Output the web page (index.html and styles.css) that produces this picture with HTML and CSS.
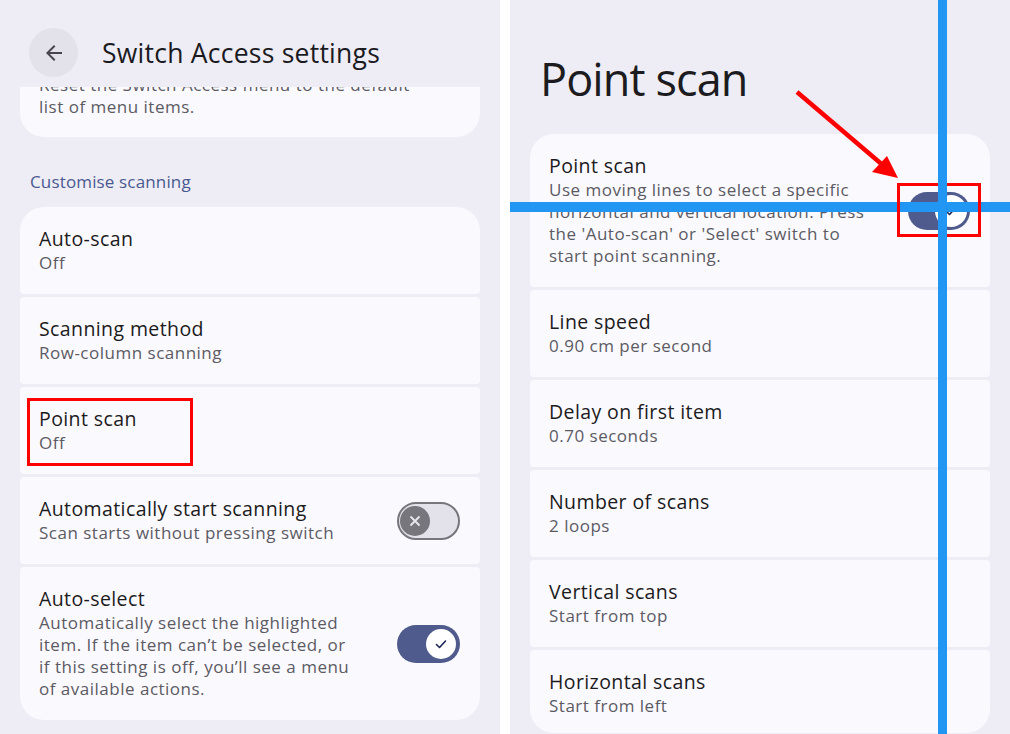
FILE: index.html
```html
<!DOCTYPE html>
<html lang="en">
<head>
<meta charset="utf-8">
<title>Switch Access settings – Point scan</title>
<link rel="stylesheet" href="styles.css">
</head>
<body>
<div class="screens">
  <section class="panel left">
    <header class="appbar">
      <button class="back" aria-label="Back">
        <svg viewBox="0 0 24 24" width="24" height="24"><path d="M20 11H7.83l5.59-5.59L12 4l-8 8 8 8 1.41-1.41L7.83 13H20v-2z" fill="#49454f"/></svg>
      </button>
      <h1 class="appbar-title">Switch Access settings</h1>
    </header>
    <div class="card clipped">
      <p class="clipped-text">Reset the Switch Access menu to the default<br>list of menu items.</p>
    </div>
    <h2 class="section">Customise scanning</h2>
    <div class="group">
      <div class="item">
        <div class="text"><div class="title">Auto-scan</div><div class="sub">Off</div></div>
      </div>
      <div class="item">
        <div class="text"><div class="title">Scanning method</div><div class="sub">Row-column scanning</div></div>
      </div>
      <div class="item">
        <div class="text"><div class="title">Point scan</div><div class="sub">Off</div></div>
      </div>
      <div class="item">
        <div class="text"><div class="title">Automatically start scanning</div><div class="sub">Scan starts without pressing switch</div></div>
        <span class="toggle off"><span class="knob"><svg viewBox="0 0 16 16" width="16" height="16"><path d="M4 4l8 8M12 4l-8 8" stroke="#e9e8ee" stroke-width="1.8" stroke-linecap="round"/></svg></span></span>
      </div>
      <div class="item">
        <div class="text narrow"><div class="title">Auto-select</div><div class="sub">Automatically select the highlighted item. If the item can’t be selected, or if this setting is off, you’ll see a menu of available actions.</div></div>
        <span class="toggle on"><span class="knob"><svg viewBox="0 0 16 16" width="16" height="16"><path d="M3.5 8.5l3 3 6-6.5" stroke="#1b2656" stroke-width="1.6" fill="none" stroke-linecap="round" stroke-linejoin="round"/></svg></span></span>
      </div>
    </div>
    <div class="mark mark-left"></div>
  </section>

  <section class="panel right">
    <h1 class="big-title">Point scan</h1>
    <div class="group">
      <div class="item">
        <div class="text narrow2"><div class="title">Point scan</div><div class="sub">Use moving lines to select a specific horizontal and vertical location. Press the 'Auto-scan' or 'Select' switch to start point scanning.</div></div>
        <span class="toggle on big"><span class="knob"><svg viewBox="0 0 16 16" width="16" height="16"><path d="M3.5 8.5l3 3 6-6.5" stroke="#1b2656" stroke-width="1.6" fill="none" stroke-linecap="round" stroke-linejoin="round"/></svg></span></span>
      </div>
      <div class="item">
        <div class="text"><div class="title">Line speed</div><div class="sub">0.90 cm per second</div></div>
      </div>
      <div class="item">
        <div class="text"><div class="title">Delay on first item</div><div class="sub">0.70 seconds</div></div>
      </div>
      <div class="item">
        <div class="text"><div class="title">Number of scans</div><div class="sub">2 loops</div></div>
      </div>
      <div class="item">
        <div class="text"><div class="title">Vertical scans</div><div class="sub">Start from top</div></div>
      </div>
      <div class="item last">
        <div class="text"><div class="title">Horizontal scans</div><div class="sub">Start from left</div></div>
      </div>
    </div>
    <div class="scan-line horizontal"></div>
    <div class="mark mark-right"></div>
    <div class="scan-line vertical"></div>
    <svg class="arrow" viewBox="0 0 500 734" width="500" height="734">
      <line x1="287" y1="92" x2="375" y2="167" stroke="#ff0000" stroke-width="4.5"/>
      <polygon points="388,178 362,172 377,156" fill="#ff0000"/>
    </svg>
  </section>
</div>
</body>
</html>
```

FILE: styles.css
```css
* { box-sizing: border-box; }
html, body { margin: 0; padding: 0; }
body {
  background: #ffffff;
  font-family: "Open Sans", "Liberation Sans", sans-serif;
  color: #1c1b20;
}
.screens {
  display: flex;
  gap: 10px;
  width: 1010px;
  height: 734px;
  overflow: hidden;
}
.panel {
  position: relative;
  width: 500px;
  height: 734px;
  background: #eeedf5;
  overflow: hidden;
  padding: 0 20px;
}
.appbar {
  height: 87px;
  display: flex;
  align-items: center;
  padding: 18px 0 0 9px;
  gap: 24px;
  position: relative;
  z-index: 2;
  background: #eeedf5;
}
.back {
  width: 49px;
  height: 49px;
  border-radius: 50%;
  border: none;
  background: #e3e2ea;
  display: flex;
  align-items: center;
  justify-content: center;
  padding: 0;
}
.appbar-title {
  margin: 0;
  font-weight: 400;
  font-size: 26.5px;
  line-height: 34px;
  letter-spacing: 0.25px;
  color: #1b1b1f;
}
.card {
  background: #faf9fe;
}
.clipped {
  height: 50px;
  overflow: hidden;
  border-radius: 0 0 24px 24px;
  padding: 0 19px;
}
.clipped-text {
  margin: -13px 0 0 0;
  font-size: 17px;
  line-height: 22px;
  letter-spacing: 0.5px;
  color: #5c5b63;
}
.section {
  margin: 34px 0 14px 10px;
  font-size: 17px;
  line-height: 22px;
  font-weight: 400;
  letter-spacing: 0.15px;
  color: #4a5990;
}
.group {
  display: flex;
  flex-direction: column;
  gap: 3px;
}
.item {
  background: #faf9fe;
  border-radius: 4px;
  min-height: 87px;
  padding: 20px 20px 20px 19px;
  display: flex;
  align-items: center;
  gap: 20px;
}
.item:first-child { border-radius: 24px 24px 4px 4px; }
.item:last-child { border-radius: 4px 4px 24px 24px; }
.text { flex: 1; }
.text.narrow { max-width: 316px; }
.text.narrow2 { max-width: 332px; }
.title {
  font-size: 19.5px;
  line-height: 24px;
  color: #1c1b20;
  letter-spacing: 0.4px;
}
.sub {
  margin-top: 1px;
  font-size: 17px;
  line-height: 22px;
  letter-spacing: 0.5px;
  color: #5c5b63;
}
.toggle {
  margin-left: auto;
  flex: none;
  width: 63px;
  height: 38px;
  border-radius: 19px;
  display: flex;
  align-items: center;
}
.toggle.off {
  background: #e3e2ea;
  border: 2px solid #77767d;
  padding-left: 1px;
}
.toggle.off .knob {
  width: 30px;
  height: 30px;
  border-radius: 50%;
  background: #77767d;
  display: flex;
  align-items: center;
  justify-content: center;
}
.toggle.on {
  background: #4f5b8c;
  justify-content: flex-end;
  padding-right: 4px;
}
.toggle.on .knob {
  width: 30px;
  height: 30px;
  border-radius: 50%;
  background: #ffffff;
  display: flex;
  align-items: center;
  justify-content: center;
}
.toggle.big { width: 62px; padding-right: 3px; }
.toggle.big .knob { width: 32px; height: 32px; }
.big-title {
  margin: 53px 0 0 10px;
  height: 81px;
  font-size: 45px;
  line-height: 52px;
  font-weight: 400;
  letter-spacing: -0.9px;
  color: #1c1b20;
}
.right .item.last { min-height: 83px; padding-bottom: 16px; }
.mark {
  position: absolute;
  border: 3px solid #ff0000;
}
.mark-left { left: 27px; top: 398px; width: 166px; height: 68px; }
.mark-right { left: 387px; top: 183px; width: 84px; height: 54px; }
.scan-line {
  position: absolute;
  background: #2196f3;
}
.scan-line.horizontal { left: 0; right: 0; top: 202px; height: 10px; }
.scan-line.vertical { left: 428px; top: 0; bottom: 0; width: 9px; }
.arrow {
  position: absolute;
  left: 0;
  top: 0;
  pointer-events: none;
}
```
